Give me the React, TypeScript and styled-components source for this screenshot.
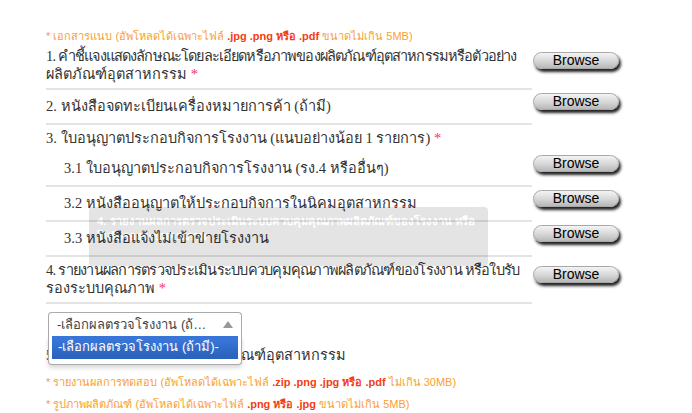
import styled, { createGlobalStyle } from "styled-components";

const GlobalStyle = createGlobalStyle`
  body {
    margin: 0;
    background: #fff;
    color: #333;
    font-family: "Liberation Serif", serif;
  }
`;

const Page = styled.div`
  box-sizing: border-box;
  height: 413px;
  overflow: hidden;
  padding: 29px 0 0 46px;
`;

const Note = styled.div<{ $gap?: number }>`
  margin-top: ${(p) => p.$gap ?? 0}px;
  font-family: "Liberation Sans", sans-serif;
  font-size: 11px;
  line-height: 14px;
  white-space: nowrap;
  color: #f9a030;

  b {
    font-weight: bold;
    color: #f33d14;
  }
`;

const FileTable = styled.div`
  position: relative;
  display: grid;
  grid-template-columns: 486px 100px;
`;

const Label = styled.div<{ $indent?: boolean; $plain?: boolean }>`
  display: flex;
  flex-direction: column;
  justify-content: center;
  padding: 4px 0 5px ${(p) => (p.$indent ? 18 : 0)}px;
  font-size: 14.5px;
  line-height: 18px;
  white-space: nowrap;
  border-bottom: ${(p) => (p.$plain ? "none" : "2px solid #e4e4e4")};
`;

const Line = styled.span<{ $squeeze?: number }>`
  letter-spacing: ${(p) => p.$squeeze ?? 0}px;
`;

const Required = styled.span`
  color: #f3366a;
`;

const ButtonCell = styled.div`
  display: flex;
  align-items: center;
  padding: 3px 0 15px 1px;
`;

const BrowseButton = styled.button`
  width: 86px;
  height: 17px;
  padding: 0;
  border: 1px solid #a8a8a8;
  border-radius: 9px;
  background: linear-gradient(#f4f4f4, #d6d6d6 55%, #b8b8b8);
  box-shadow: 2px 3px 3px #222;
  font-family: "Liberation Sans", sans-serif;
  font-size: 14px;
  line-height: 15px;
  color: #000;
`;

const Tooltip = styled.div`
  position: absolute;
  left: 43px;
  top: 164px;
  width: 383px;
  height: 45px;
  padding: 7px 8px;
  border-radius: 4px;
  background: #000;
  opacity: 0.1;
  font-family: "Liberation Sans", sans-serif;
  font-size: 11.3px;
  font-weight: bold;
  line-height: 15px;
  white-space: nowrap;
  color: #fff;

  &::after {
    content: "";
    position: absolute;
    left: 196px;
    bottom: -6px;
    border: 6px solid transparent;
    border-bottom: 0;
    border-top-color: #000;
  }
`;

const SelectRow = styled.div`
  padding: 8px 0 0 2px;
`;

const Chosen = styled.div`
  position: relative;
  width: 194px;
  font-family: "Liberation Sans", sans-serif;
  font-size: 13px;
  white-space: nowrap;
`;

const ChosenSingle = styled.div`
  box-sizing: border-box;
  display: flex;
  align-items: center;
  justify-content: space-between;
  height: 24px;
  padding: 0 8px;
  border: 1px solid #aaa;
  border-bottom: 0;
  border-radius: 4px 4px 0 0;
  background: #fff;
  color: #444;

  span {
    overflow: hidden;
    text-overflow: ellipsis;
    max-width: 152px;
  }
`;

const Arrow = styled.i`
  width: 0;
  height: 0;
  border: 5px solid transparent;
  border-top: 0;
  border-bottom: 7px solid #999;
`;

const ChosenDrop = styled.ul`
  position: absolute;
  z-index: 2;
  left: 0;
  right: 0;
  top: 24px;
  margin: 0;
  padding: 0 3px 5px;
  list-style: none;
  border: 1px solid #aaa;
  border-top: 0;
  border-radius: 0 0 4px 4px;
  background: #fff;
  box-shadow: 0 3px 4px rgba(0, 0, 0, 0.15);
`;

const Option = styled.li`
  height: 23px;
  padding: 0 6px;
  line-height: 22px;
  color: #fff;
  background: linear-gradient(#3875d7 20%, #2a62bc 90%);
`;

const PlainLabel = styled.div`
  margin-top: 10px;
  font-size: 14.5px;
  line-height: 18px;
`;

const BottomRule = styled.div`
  margin-top: 4px;
  border-top: 2px solid #999;
`;

type Row = {
  lines: string[];
  squeeze?: number;
  required?: boolean;
  indent?: boolean;
  button?: boolean;
  plain?: boolean;
};

const rows: Row[] = [
  {
    lines: [
      "1. คำชี้แจงแสดงลักษณะโดยละเอียดหรือภาพของผลิตภัณฑ์อุตสาหกรรมหรือตัวอย่าง",
      "ผลิตภัณฑ์อุตสาหกรรม",
    ],
    squeeze: -0.85,
    required: true,
    button: true,
  },
  { lines: ["2. หนังสือจดทะเบียนเครื่องหมายการค้า (ถ้ามี)"], button: true },
  {
    lines: ["3. ใบอนุญาตประกอบกิจการโรงงาน (แนบอย่างน้อย 1 รายการ)"],
    required: true,
    plain: true,
  },
  { lines: ["3.1 ใบอนุญาตประกอบกิจการโรงงาน (รง.4 หรืออื่นๆ)"], indent: true, button: true },
  { lines: ["3.2 หนังสืออนุญาตให้ประกอบกิจการในนิคมอุตสาหกรรม"], indent: true, button: true },
  { lines: ["3.3 หนังสือแจ้งไม่เข้าข่ายโรงงาน"], indent: true, button: true },
  {
    lines: [
      "4. รายงานผลการตรวจประเมินระบบควบคุมคุณภาพผลิตภัณฑ์ของโรงงาน หรือใบรับ",
      "รองระบบคุณภาพ",
    ],
    squeeze: -0.75,
    required: true,
    button: true,
  },
];

export default function App() {
  return (
    <>
      <GlobalStyle />
      <Page>
        <Note>
          * เอกสารแนบ (อัพโหลดได้เฉพาะไฟล์ <b>.jpg .png หรือ .pdf</b> ขนาดไม่เกิน 5MB)
        </Note>
        <FileTable>
          {rows.map((row) => (
            <>
              <Label key={row.lines[0]} $indent={row.indent} $plain={row.plain}>
                {row.lines.map((line, i) => (
                  <Line key={line} $squeeze={i === 0 ? row.squeeze : 0}>
                    {line}
                    {row.required && i === row.lines.length - 1 && <Required> *</Required>}
                  </Line>
                ))}
              </Label>
              <ButtonCell>{row.button && <BrowseButton>Browse</BrowseButton>}</ButtonCell>
            </>
          ))}
          <Tooltip>
            4. รายงานผลการตรวจประเมินระบบควบคุมคุณภาพผลิตภัณฑ์ของโรงงาน หรือ
            <br />
            ใบรับรองระบบคุณภาพ
          </Tooltip>
        </FileTable>
        <SelectRow>
          <Chosen>
            <ChosenSingle>
              <span>-เลือกผลตรวจโรงงาน (ถ้ามี)-</span>
              <Arrow />
            </ChosenSingle>
            <ChosenDrop>
              <Option>-เลือกผลตรวจโรงงาน (ถ้ามี)-</Option>
            </ChosenDrop>
          </Chosen>
        </SelectRow>
        <PlainLabel>5. ใบรับรองมาตรฐานของผลิตภัณฑ์อุตสาหกรรม</PlainLabel>
        <Note $gap={11}>
          * รายงานผลการทดสอบ (อัพโหลดได้เฉพาะไฟล์ <b>.zip .png .jpg หรือ .pdf</b> ไม่เกิน 30MB)
        </Note>
        <Note $gap={8}>
          * รูปภาพผลิตภัณฑ์ (อัพโหลดได้เฉพาะไฟล์ <b>.png หรือ .jpg</b> ขนาดไม่เกิน 5MB)
        </Note>
        <BottomRule />
      </Page>
    </>
  );
}
